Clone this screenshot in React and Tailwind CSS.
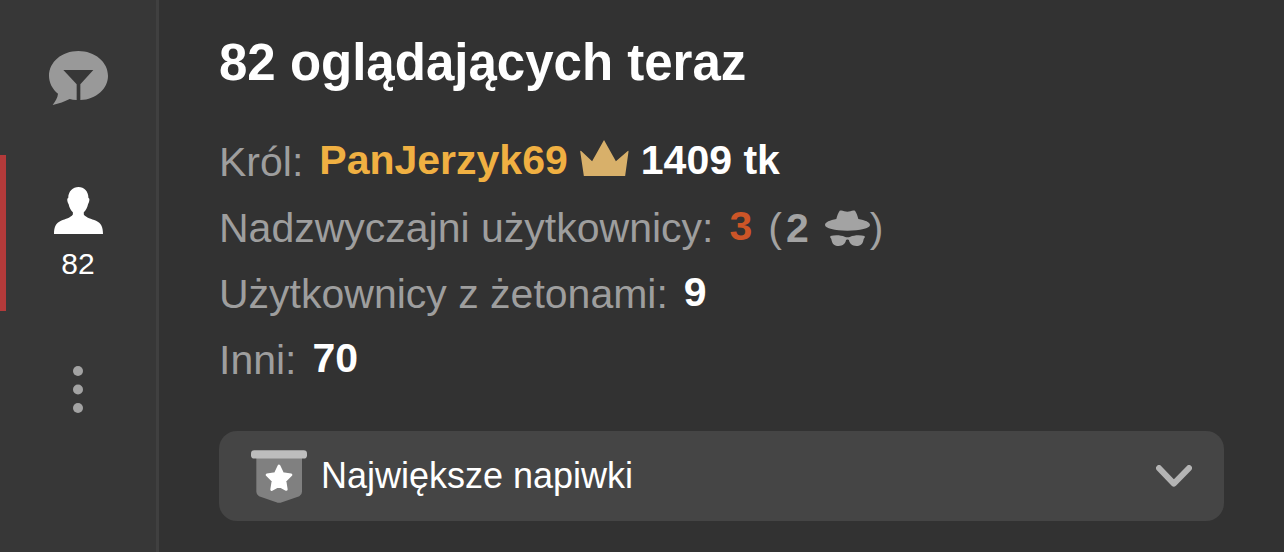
function ChatFilterIcon() {
  return (
    <svg viewBox="145 60 177 162" className="h-[54px] w-[59px] shrink-0" fill="currentColor" aria-hidden="true">
      <path
        fillRule="evenodd"
        d="M233 60C282 60 322 93 322 134C322 173 287 205 239 207V160L278 117H188L228 160V207C220 207 213 206 207 204C192 212 175 218 156 222C164 211 171 200 172 188C155 174 145 155 145 134C145 93 184 60 233 60Z"
      />
    </svg>
  )
}

function UserIcon() {
  return (
    <svg viewBox="165 110 148 142" className="h-[47px] w-[49px] shrink-0" fill="currentColor" aria-hidden="true">
      <path d="M239 110C256 110 269 123 269 143C274 144 272 155 268 161C266 172 261 180 255 186V193C262 203 278 206 292 212C307 219 313 230 313 252H165C165 230 171 219 186 212C200 206 215 203 222 193V186C216 180 211 172 209 161C205 155 203 144 208 143C208 123 222 110 239 110Z" />
    </svg>
  )
}

function DotsIcon() {
  return (
    <svg viewBox="0 0 10 47" className="h-[47px] w-[10px] shrink-0" fill="currentColor" aria-hidden="true">
      <circle cx="5" cy="5" r="5" />
      <circle cx="5" cy="23.5" r="5" />
      <circle cx="5" cy="42" r="5" />
    </svg>
  )
}

function CrownIcon() {
  return (
    <svg viewBox="56 29 147 109" className="h-[36px] w-[49px] shrink-0" fill="currentColor" aria-hidden="true">
      <path d="M128 29L164 93L200 62Q203 61 202 65L192 138H67L56 64Q56 60 59 62L92 93Z" />
    </svg>
  )
}

function IncognitoIcon() {
  return (
    <svg viewBox="795 241 135 108" className="h-[36px] w-[45px] shrink-0" fill="currentColor" aria-hidden="true">
      <path d="M839 243C847 240 854 246 862 246C870 246 877 240 885 243C890 251 893 259 895 268C915 271 930 278 930 286C930 296 900 303 862 303C825 303 795 296 795 286C795 278 810 271 829 268C831 259 834 251 839 243Z" />
      <path d="M811 319C825 315 843 316 854 321C859 323 866 323 871 321C882 316 900 315 914 319V325C911 326 911 329 910 333C907 344 901 349 889 349C876 349 869 342 867 332C866 329 859 329 858 332C856 342 849 349 836 349C824 349 818 344 815 333C814 329 814 326 811 325Z" />
    </svg>
  )
}

function BadgeIcon() {
  return (
    <svg viewBox="123 92 168 158" className="h-[53px] w-[56px] shrink-0" aria-hidden="true">
      <path fill="#808080" d="M139 105H276V217Q276 226 268 230L216 248Q207 251 199 248L147 230Q139 226 139 217Z" />
      <rect x="123" y="92" width="168" height="25" rx="10" fill="#bdbdbd" />
      <path
        d="M207 139L218 162L243 166L225 184L229 210L207 198L185 210L189 184L171 166L196 162Z"
        fill="#fff"
        stroke="#fff"
        strokeWidth="8"
        strokeLinejoin="round"
      />
    </svg>
  )
}

function ChevronIcon() {
  return (
    <svg viewBox="105 135 109 66" className="h-[22px] w-[36px] shrink-0" fill="none" aria-hidden="true">
      <path d="M114 144L159 191L205 144" stroke="#b4b4b4" strokeWidth="18" strokeLinecap="round" strokeLinejoin="round" />
    </svg>
  )
}

function StatRow({ label, children }) {
  return (
    <div className="flex h-[66px] items-center gap-4">
      <dt className="text-[#9e9e9e]">{label}</dt>
      <dd className="flex items-center">{children}</dd>
    </div>
  )
}

export default function App() {
  return (
    <div className="flex min-h-screen bg-[#323232] font-['Liberation_Sans',Arial,sans-serif] text-white">
      <nav className="flex shrink-0 flex-col border-r-[3px] border-[#404040] bg-[#373737]">
        <button aria-label="Czat" className="flex h-[155px] w-[156px] items-center justify-center text-[#999999]">
          <ChatFilterIcon />
        </button>
        <button
          aria-label="Użytkownicy"
          className="flex h-[156px] w-[156px] flex-col items-center justify-center gap-3 border-x-[6px] border-r-transparent border-l-[#b33a3a] pt-[2px]"
        >
          <UserIcon />
          <span className="text-[30px] leading-9">82</span>
        </button>
        <button aria-label="Więcej" className="flex h-[156px] w-[156px] items-center justify-center text-[#a3a3a3]">
          <DotsIcon />
        </button>
      </nav>

      <main className="min-w-0 flex-1 px-[60px] py-[31px]">
        <h1 className="text-[51px] leading-[64px] font-bold">82 oglądających teraz</h1>

        <dl className="mt-[34px] text-[41px] leading-[66px]">
          <StatRow label="Król:">
            <b className="pb-1 text-[#f0b042]">PanJerzyk69</b>
            <span className="ml-3 pb-2 text-[#d8b06a]">
              <CrownIcon />
            </span>
            <b className="ml-3 pb-1">1409 tk</b>
          </StatRow>
          <StatRow label="Nadzwyczajni użytkownicy:">
            <b className="pb-1 text-[#cc5527]">3</b>
            <span className="ml-4 flex items-center text-[#a3a3a3]">
              (<b className="mr-4 ml-1">2</b>
              <IncognitoIcon />)
            </span>
          </StatRow>
          <StatRow label="Użytkownicy z żetonami:">
            <b className="pb-1">9</b>
          </StatRow>
          <StatRow label="Inni:">
            <b className="pb-1">70</b>
          </StatRow>
        </dl>

        <button
          aria-expanded="false"
          className="mt-[38px] flex h-[90px] w-full items-center rounded-[18px] bg-[#454545] px-8 text-left"
        >
          <BadgeIcon />
          <span className="ml-[14px] flex-1 text-[36px]">Największe napiwki</span>
          <ChevronIcon />
        </button>
      </main>
    </div>
  )
}
